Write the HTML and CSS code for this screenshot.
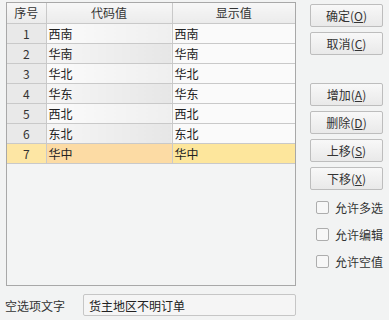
FILE: index.html
```html
<!DOCTYPE html>
<html lang="zh-cn">

<head>
  <meta charset="UTF-8">
  <title>下拉选项</title>
  <link rel="stylesheet" href="styles.css">
</head>

<body>
  <div class="dialog">
    <div class="left">
      <div class="grid">
        <table>
          <thead>
            <tr>
              <th class="c-no">序号</th>
              <th class="c-code">代码值</th>
              <th class="c-show">显示值</th>
            </tr>
          </thead>
          <tbody>
            <tr><td class="c-no">1</td><td class="c-code">西南</td><td class="c-show">西南</td></tr>
            <tr class="even"><td class="c-no">2</td><td class="c-code">华南</td><td class="c-show">华南</td></tr>
            <tr><td class="c-no">3</td><td class="c-code">华北</td><td class="c-show">华北</td></tr>
            <tr class="even"><td class="c-no">4</td><td class="c-code">华东</td><td class="c-show">华东</td></tr>
            <tr><td class="c-no">5</td><td class="c-code">西北</td><td class="c-show">西北</td></tr>
            <tr class="even"><td class="c-no">6</td><td class="c-code">东北</td><td class="c-show">东北</td></tr>
            <tr class="selected"><td class="c-no">7</td><td class="c-code">华中</td><td class="c-show">华中</td></tr>
          </tbody>
        </table>
      </div>
      <div class="empty-row">
        <label for="emptyText">空选项文字</label>
        <input type="text" id="emptyText" value="货主地区不明订单">
      </div>
    </div>

    <div class="right">
      <button class="btn">确定(<u>O</u>)</button>
      <button class="btn">取消(<u>C</u>)</button>
      <button class="btn gap-top">增加(<u>A</u>)</button>
      <button class="btn">删除(<u>D</u>)</button>
      <button class="btn">上移(<u>S</u>)</button>
      <button class="btn">下移(<u>X</u>)</button>
      <label class="check"><span class="box"></span>允许多选</label>
      <label class="check"><span class="box"></span>允许编辑</label>
      <label class="check"><span class="box"></span>允许空值</label>
    </div>
  </div>
</body>

</html>
```

FILE: styles.css
```css
body {
  margin: 0;
  padding: 0;
  background: #f2f3f3;
  font-family: "Noto Sans CJK SC", "Noto Sans", sans-serif;
  font-size: 12px;
  color: #222;
}

.dialog {
  display: flex;
  width: 389px;
  height: 320px;
}

.left {
  margin-left: 6px;
  margin-top: 2px;
  width: 290px;
  display: flex;
  flex-direction: column;
}

.grid {
  height: 284px;
  border: 1px solid #a8a8a8;
  box-sizing: border-box;
  background: #f3f4f4;
}

table {
  width: 100%;
  border-collapse: collapse;
  table-layout: fixed;
}

th,
td {
  height: 20px;
  padding: 0 2px;
  box-sizing: border-box;
  border-right: 1px solid #c9c9c9;
  border-bottom: 1px solid #c9c9c9;
  font-weight: normal;
  line-height: 19px;
  white-space: nowrap;
}

th {
  background: linear-gradient(#f7f7f7, #ebebeb);
  text-align: center;
  color: #333;
}

th.c-show,
td.c-show {
  border-right: none;
}

.c-no {
  width: 39px;
  text-align: center;
}

.c-code {
  width: 126px;
}

td.c-no {
  background: #e9e9e9;
  color: #333;
}

td.c-code {
  background: linear-gradient(to right, #fbfbfb, #efefef);
}

td.c-show {
  background: #fafafa;
}

tr.even td.c-code {
  background: linear-gradient(to right, #f6f6f6, #e6e6e6);
}

tr.selected td.c-no {
  background: #fde6a4;
}

tr.selected td.c-code {
  background: #fcdba4;
}

tr.selected td.c-show {
  background: #fde69c;
}

.empty-row {
  display: flex;
  align-items: center;
  margin-top: 8px;
}

.empty-row label {
  width: 78px;
  margin-left: -1px;
  color: #333;
}

.empty-row input {
  width: 213px;
  height: 22px;
  box-sizing: border-box;
  border: 1px solid #c6c6c6;
  border-radius: 2px;
  background: #f5f5f5;
  font-family: inherit;
  font-size: 12px;
  padding: 0 5px;
  color: #222;
}

.right {
  margin-left: 14px;
  margin-top: 4px;
  width: 73px;
  display: flex;
  flex-direction: column;
}

.btn {
  height: 23px;
  margin-bottom: 5px;
  border: 1px solid #bdbdbd;
  border-radius: 2px;
  background: linear-gradient(#f8f8f8, #e9e9e9);
  font-family: inherit;
  font-size: 12px;
  color: #333;
  padding: 0;
}

.gap-top {
  margin-top: 23px;
}

.check {
  display: flex;
  align-items: center;
  height: 16px;
  margin-left: 6px;
  margin-bottom: 11px;
  color: #333;
  white-space: nowrap;
}

.check:first-of-type {
  margin-top: 4px;
}

.box {
  width: 11px;
  height: 11px;
  border: 1px solid #adadad;
  border-radius: 2px;
  background: #f7f7f7;
  margin-right: 6px;
}
```
